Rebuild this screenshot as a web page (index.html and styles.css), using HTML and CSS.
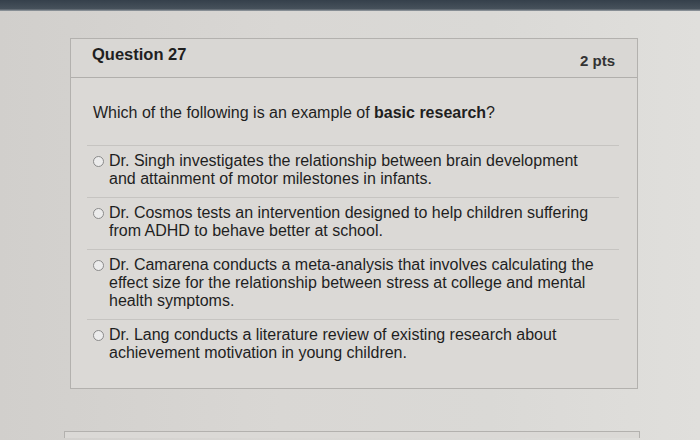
FILE: index.html
```html
<!DOCTYPE html>
<html>
<head>
<meta charset="utf-8">
<link rel="stylesheet" href="styles.css">
</head>
<body>
<div class="topbar"></div>
<div class="card">
  <div class="card-header">
    <span class="q-title">Question 27</span>
    <span class="q-pts">2 pts</span>
  </div>
  <div class="card-body">
    <p class="q-text">Which of the following is an example of <b>basic research</b>?</p>
    <div class="answers">
      <div class="answer"><span class="radio"></span><span class="a-text">Dr. Singh investigates the relationship between brain development and attainment of motor milestones in infants.</span></div>
      <div class="answer"><span class="radio"></span><span class="a-text">Dr. Cosmos tests an intervention designed to help children suffering from ADHD to behave better at school.</span></div>
      <div class="answer"><span class="radio"></span><span class="a-text">Dr. Camarena conducts a meta-analysis that involves calculating the effect size for the relationship between stress at college and mental health symptoms.</span></div>
      <div class="answer"><span class="radio"></span><span class="a-text">Dr. Lang conducts a literature review of existing research about achievement motivation in young children.</span></div>
    </div>
  </div>
</div>
<div class="card next-card"></div>
</body>
</html>
```

FILE: styles.css
```css
html, body {
  margin: 0;
  padding: 0;
}
body {
  width: 700px;
  height: 440px;
  overflow: hidden;
  background: linear-gradient(90deg, #d1cfcc 0%, #d9d7d4 40%, #dad9d6 70%, #e0dfdc 100%);
  font-family: "Liberation Sans", Arial, sans-serif;
  color: #1f1f1f;
}
.topbar {
  height: 11px;
  background: linear-gradient(180deg, #35404b 0%, #46515b 80%, #9aa0a5 100%);
}
.card {
  margin: 27px 0 0 70px;
  width: 566px;
  border: 1px solid #b3b1ae;
  background: #dbd9d6;
}
.card-header {
  height: 38px;
  display: flex;
  justify-content: space-between;
  align-items: flex-start;
  padding: 0 22px 0 21px;
  border-bottom: 1px solid #b1afac;
  background: #d9d7d4;
}
.q-title {
  font-size: 16.5px;
  font-weight: bold;
  line-height: 18px;
  margin-top: 6px;
}
.q-pts {
  font-size: 15px;
  font-weight: bold;
  line-height: 18px;
  margin-top: 13px;
  color: #333;
}
.card-body {
  padding: 26px 18px 17px 16px;
}
.q-text {
  margin: 0 0 23px 6px;
  font-size: 16px;
  line-height: 18px;
}
.answers {
  display: flex;
  flex-direction: column;
}
.answer {
  display: flex;
  align-items: flex-start;
  gap: 5px;
  padding: 6px 0 9px 6px;
  border-top: 1px solid #c6c4c1;
  font-size: 16px;
  line-height: 18px;
}
.radio {
  flex: none;
  width: 9px;
  height: 9px;
  margin-top: 4px;
  border: 1px solid #8a8a8a;
  border-radius: 50%;
  background: #ececec;
}
.a-text {
  max-width: 495px;
}
.next-card {
  margin-top: 42px;
  height: 6px;
  margin-left: 64px;
  width: 574px;
  border-bottom: none;
}
```
